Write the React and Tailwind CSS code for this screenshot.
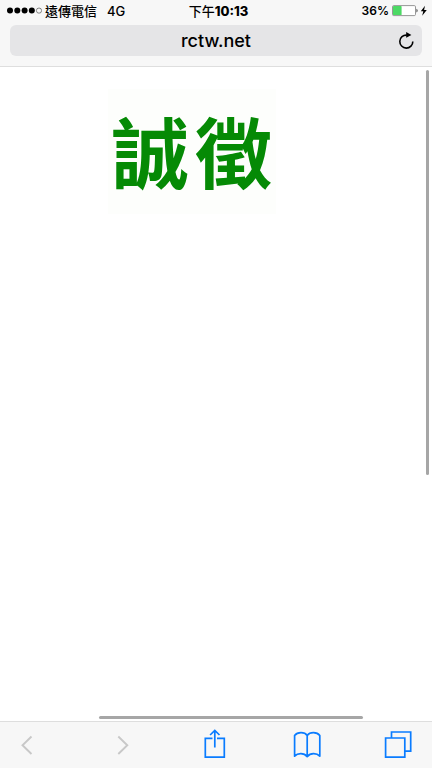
// src/App.jsx
import React from "react";

const StatusBar = () => {
  return (
    <div className="grid grid-cols-3 items-center h-[22px] pl-[7px] pr-1 text-[13px] leading-[22px] font-medium whitespace-nowrap">
      <div className="flex items-center">
        {/* Signal strength */}
        <svg width="35" height="8" viewBox="0 0 35 8" className="mr-[3px] shrink-0">
          <circle cx="3" cy="3.6" r="3" fill="#000" />
          <circle cx="10.3" cy="3.6" r="3" fill="#000" />
          <circle cx="17.6" cy="3.6" r="3" fill="#000" />
          <circle cx="24.8" cy="3.6" r="3" fill="#000" />
          <circle cx="32" cy="3.6" r="2.6" fill="none" stroke="#555" strokeWidth="0.7" />
        </svg>
        <span>遠傳電信</span>
        <span className="ml-2.5">4G</span>
      </div>

      <div className="flex justify-center pl-0.5">
        <span>下午</span>
        <span className="font-extrabold">10:13</span>
      </div>

      <div className="flex items-center justify-end">
        <span className="mr-[3px] text-xs font-semibold">36%</span>
        {/* Battery with charging bolt */}
        <svg width="36" height="12" viewBox="0 0 36 12" className="shrink-0">
          <rect x="0.5" y="0.6" width="23" height="10" rx="1.2" fill="#fff" stroke="#8a8a8a" strokeWidth="0.9" />
          <rect x="1" y="1.1" width="8.6" height="9" rx="0.6" fill="#4cd964" />
          <path d="M24.5 3.8c1.4.4 1.4 3.2 0 3.6z" fill="#333" />
          <path d="M33 .8l-4.2 5.4h2.5l-1.1 4.6 4.6-5.9h-2.7z" fill="#000" />
        </svg>
      </div>
    </div>
  );
};

const AddressBar = () => {
  return (
    <div className="px-2.5 pt-[3px] pb-2.5">
      <div className="relative h-[31px] rounded-[6px] bg-[#e5e5e7]">
        <input
          type="text"
          aria-label="Address"
          defaultValue="rctw.net"
          className="w-full h-full bg-transparent text-center text-lg font-medium outline-none"
        />
        <button type="button" aria-label="Reload" className="absolute right-1 top-0 h-full w-6 flex items-center justify-center">
          <svg width="20" height="20" viewBox="0 0 20 20" fill="none">
            <path d="M10.8 4.1A6.5 6.5 0 1 0 16.8 10.4" stroke="#000" strokeWidth="1.6" />
            <path d="M10.2 1l5.2 2.9-5.2 2.9z" fill="#000" />
          </svg>
        </button>
      </div>
    </div>
  );
};

const ToolButton = ({ label, disabled, children }) => {
  return (
    <button type="button" aria-label={label} disabled={disabled} className="text-[#0a7cff] disabled:text-[#c8c8c8]">
      <svg width="32" height="32" viewBox="0 0 32 32" fill="none" stroke="currentColor" strokeWidth="1.7">
        {children}
      </svg>
    </button>
  );
};

const Toolbar = () => {
  return (
    <nav className="flex items-center justify-between h-[47px] pl-2.5 pr-[18px] bg-[#f7f7f7] border-t border-[#dedede]">
      <ToolButton label="Back" disabled>
        <path d="M21.5 7.5L12.5 16.2l9 8.8" strokeWidth="1.9" />
      </ToolButton>
      <ToolButton label="Forward" disabled>
        <path d="M15.3 7.5l9 8.7-9 8.8" strokeWidth="1.9" />
      </ToolButton>
      <ToolButton label="Share">
        <path d="M16.5 9.3H9.3v18.9h19V9.3H21" />
        <path d="M18.8 18.5V1.5M14.1 6l4.7-4.6L23.5 6" />
      </ToolButton>
      <ToolButton label="Bookmarks">
        <path d="M18.2 6.4C15.5 2.8 8.5 2.7 5.6 6.6v20.6c3.3-3.4 9.3-3.4 12.6.4 3.3-3.8 9.3-3.8 12.6-.4V6.6c-2.9-3.9-9.9-3.8-12.6-.2zv21" strokeLinejoin="round" />
      </ToolButton>
      <ToolButton label="Tabs">
        <path d="M3.6 9h19.2v19.2H3.6z" />
        <path d="M9.5 9V3h19.2v19.2h-5.9" />
      </ToolButton>
    </nav>
  );
};

const App = () => {
  return (
    <div className="flex flex-col h-screen bg-white text-black font-['Inter','Noto_Sans_CJK_TC',sans-serif]">
      <header className="bg-[#f7f7f7] border-b border-[#dedede]">
        <StatusBar />
        <AddressBar />
      </header>

      <main className="relative flex-1 min-h-0 pt-[22px]">
        <h1 className="flex items-center justify-center gap-1.5 w-[168px] h-[125px] pt-2 ml-[25%] bg-[#fdfefc] text-[77px] leading-none font-bold text-[#058a05]">
          <span>誠</span>
          <span>徵</span>
        </h1>

        {/* Scroll indicators */}
        <div className="absolute right-[3px] top-[3px] w-[3px] h-[62%] rounded-full bg-[#a6a6a6]" />
        <div className="absolute bottom-0.5 left-[23%] h-[3px] w-[61%] rounded-full bg-[#a6a6a6]" />
      </main>

      <Toolbar />
    </div>
  );
};

export default App;
